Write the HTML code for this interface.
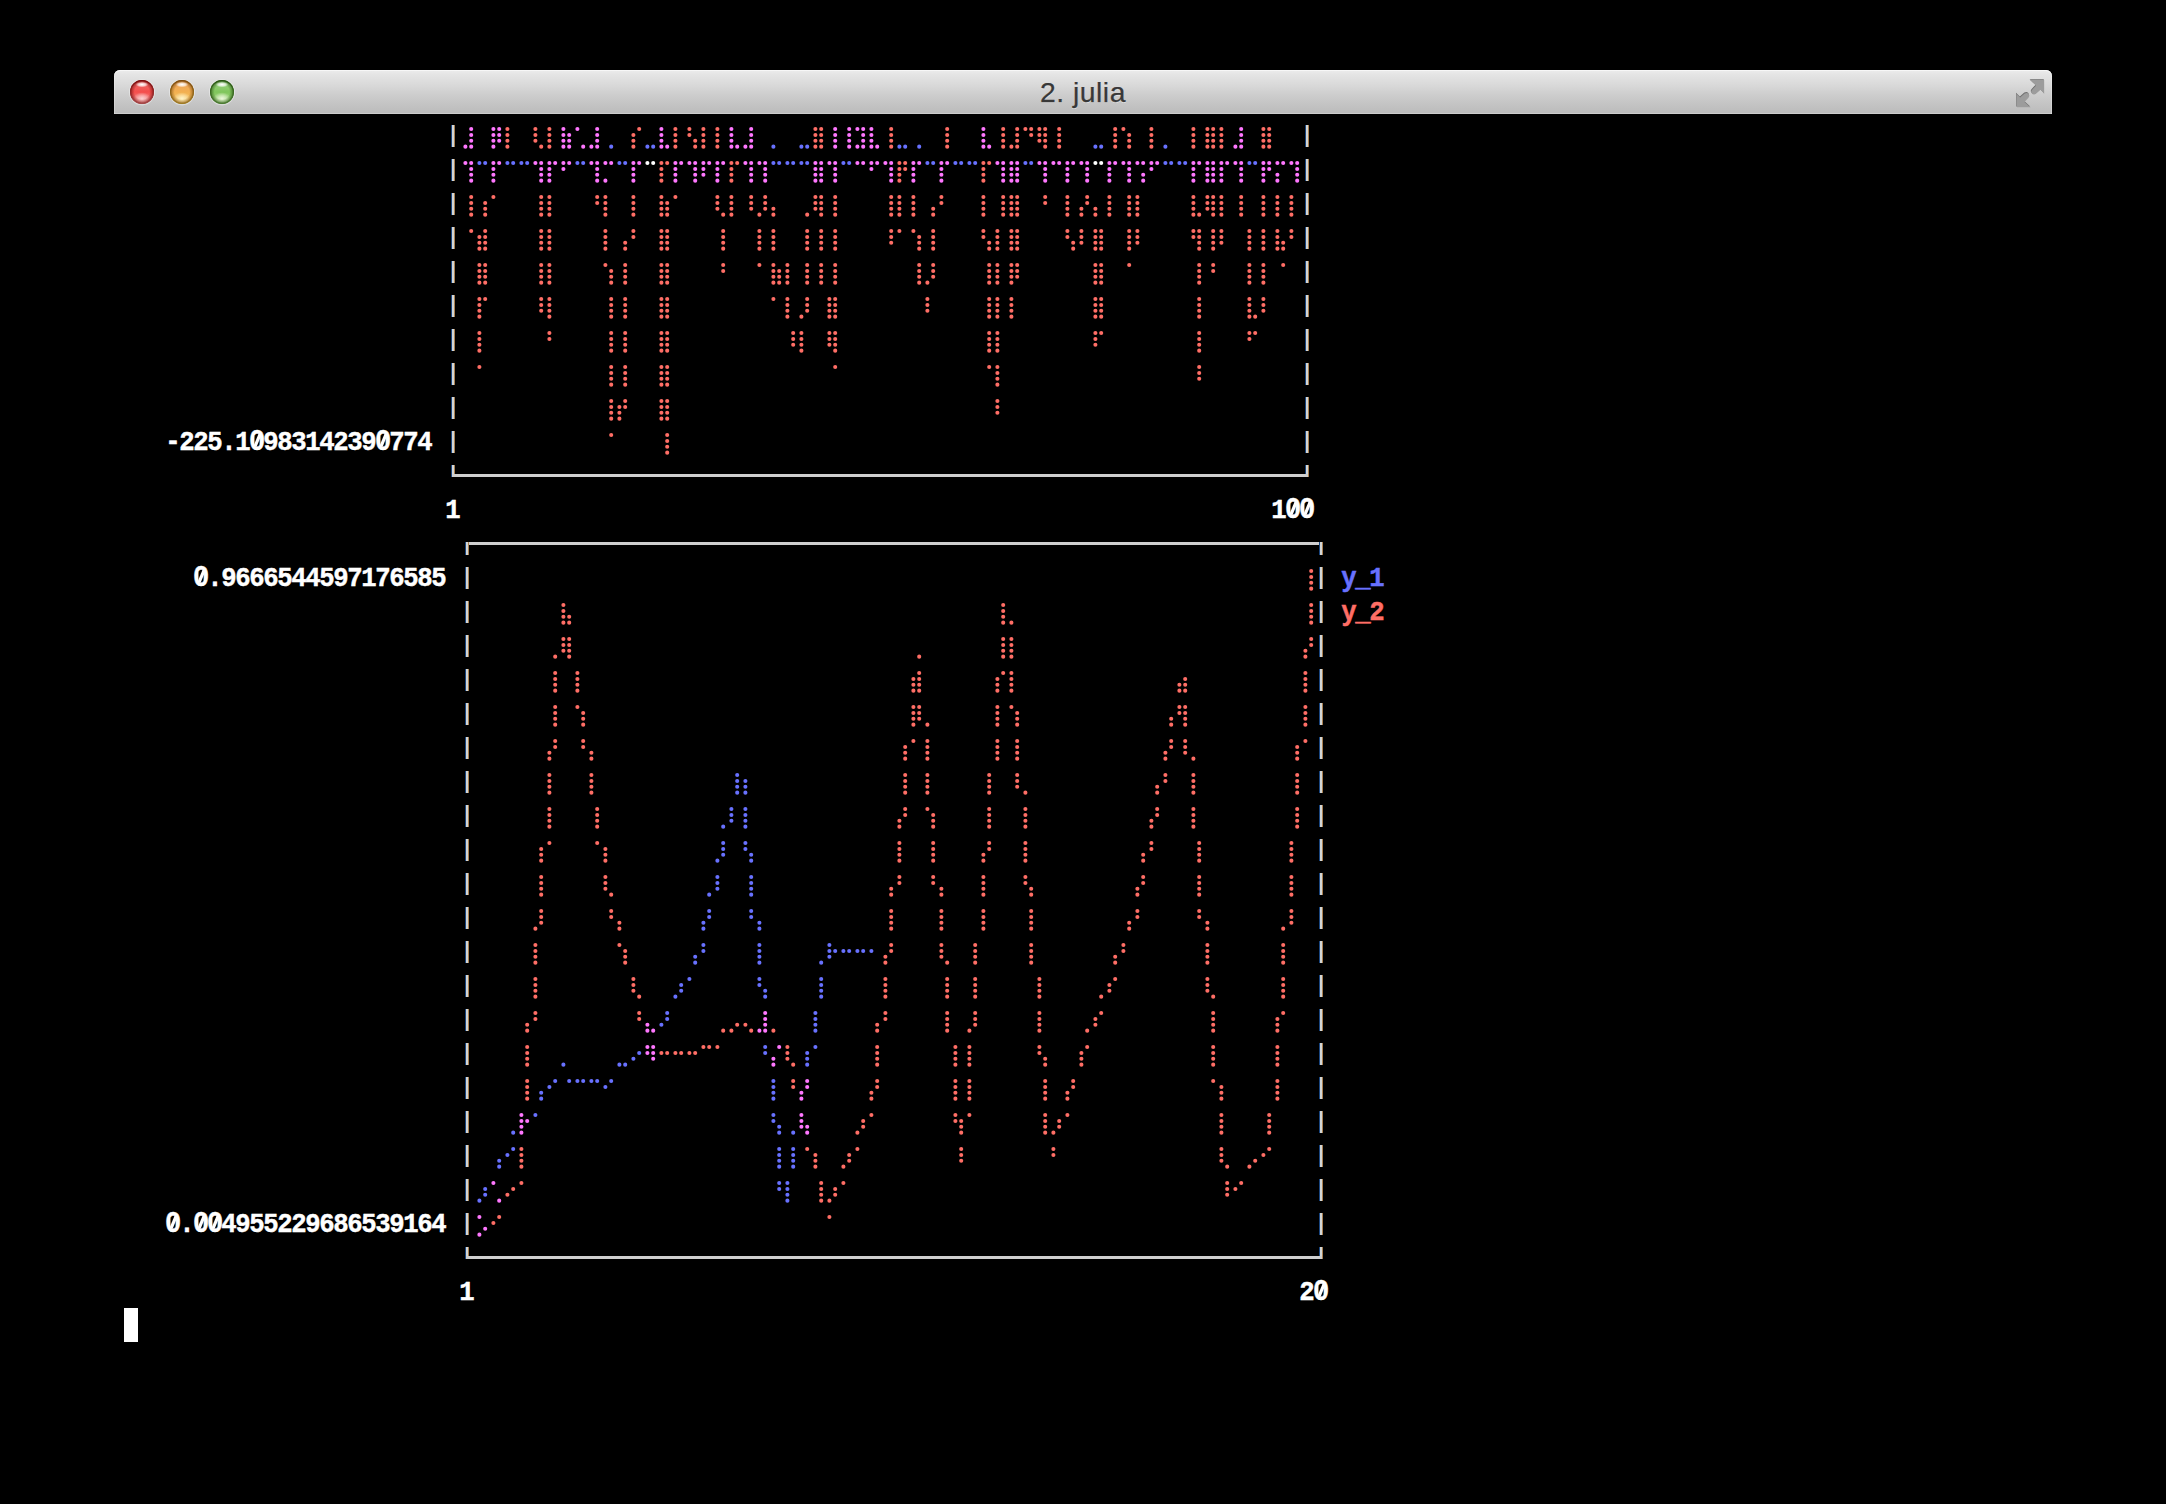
<!DOCTYPE html>
<html><head><meta charset="utf-8"><title>2. julia</title>
<style>
html,body{margin:0;padding:0;background:#000;}
body{width:2166px;height:1504px;overflow:hidden;position:relative;}
#tb{position:absolute;left:114px;top:70px;width:1938px;height:44px;border-radius:6px 6px 0 0;
 background:linear-gradient(#ececec 0px,#e4e4e4 5px,#d9d9d9 15px,#cdcdcd 25px,#c3c3c3 35px,#bcbcbc 42.5px,#cdcdcd 43px,#cdcdcd 44px);
 box-shadow:inset 0 1px 0 #f7f7f7, inset 1px 0 0 rgba(255,255,255,0.25), inset -1px 0 0 rgba(255,255,255,0.25);}
#title{position:absolute;left:0;right:0;top:77px;text-align:center;font:28.3px "Liberation Sans",sans-serif;
 color:#383838;letter-spacing:0.5px;-webkit-text-stroke:0.25px #383838;text-shadow:0 1px 0 rgba(255,255,255,0.5);line-height:30px;}
.t{position:absolute;font:bold 23.333px "Liberation Mono",monospace;line-height:34px;white-space:pre;
 transform:translateY(3px) scale(1,1.2);transform-origin:0 23px;-webkit-text-stroke:0.4px currentColor;}
svg{position:absolute;left:0;top:0;}
.c{position:relative;display:inline-block;width:14px;transform:scaleX(1.1);}
.z{transform:scale(1.16,1.05);}
.z::before{content:"";position:absolute;left:5px;top:11px;width:4px;height:8px;background:#000;}
.z::after{content:"";position:absolute;left:5.9px;top:10px;width:3.2px;height:10px;background:currentColor;transform:skewX(-24deg);}
</style></head><body>
<div id="tb"></div>
<div id="title">2. julia</div>
<svg width="2166" height="120" style="top:0">
<defs>
<radialGradient id="hl" cx="0.5" cy="0.45" r="0.5"><stop offset="0" stop-color="#fff" stop-opacity="1"/><stop offset="0.6" stop-color="#fff" stop-opacity="0.65"/><stop offset="1" stop-color="#fff" stop-opacity="0"/></radialGradient>

<linearGradient id="rrim" x1="0" y1="0" x2="0" y2="1"><stop offset="0" stop-color="#760808"/><stop offset="1" stop-color="#a85050"/></linearGradient>
<linearGradient id="rbody" x1="0" y1="0" x2="0" y2="1"><stop offset="0" stop-color="#ea7070"/><stop offset="0.5" stop-color="#f44e4c"/><stop offset="1" stop-color="#f49c9c"/></linearGradient>
<radialGradient id="rglow" cx="0.5" cy="0.5" r="0.5"><stop offset="0" stop-color="#fbd4d4" stop-opacity="0.95"/><stop offset="0.5" stop-color="#fbd4d4" stop-opacity="0.55"/><stop offset="1" stop-color="#fbd4d4" stop-opacity="0"/></radialGradient>
<radialGradient id="redge" cx="0.5" cy="0.5" r="0.5"><stop offset="0.62" stop-color="#760808" stop-opacity="0"/><stop offset="0.86" stop-color="#760808" stop-opacity="0.45"/><stop offset="1" stop-color="#760808" stop-opacity="0.9"/></radialGradient>

<linearGradient id="yrim" x1="0" y1="0" x2="0" y2="1"><stop offset="0" stop-color="#7a4a0c"/><stop offset="1" stop-color="#a08024"/></linearGradient>
<linearGradient id="ybody" x1="0" y1="0" x2="0" y2="1"><stop offset="0" stop-color="#eca060"/><stop offset="0.5" stop-color="#f2b050"/><stop offset="1" stop-color="#f6d070"/></linearGradient>
<radialGradient id="yglow" cx="0.5" cy="0.5" r="0.5"><stop offset="0" stop-color="#fff6cc" stop-opacity="0.95"/><stop offset="0.5" stop-color="#fff6cc" stop-opacity="0.55"/><stop offset="1" stop-color="#fff6cc" stop-opacity="0"/></radialGradient>
<radialGradient id="yedge" cx="0.5" cy="0.5" r="0.5"><stop offset="0.62" stop-color="#7a4a0c" stop-opacity="0"/><stop offset="0.86" stop-color="#7a4a0c" stop-opacity="0.45"/><stop offset="1" stop-color="#7a4a0c" stop-opacity="0.9"/></radialGradient>

<linearGradient id="grim" x1="0" y1="0" x2="0" y2="1"><stop offset="0" stop-color="#24500e"/><stop offset="1" stop-color="#4e7e34"/></linearGradient>
<linearGradient id="gbody" x1="0" y1="0" x2="0" y2="1"><stop offset="0" stop-color="#a0d488"/><stop offset="0.5" stop-color="#80c65c"/><stop offset="1" stop-color="#acdc8c"/></linearGradient>
<radialGradient id="gglow" cx="0.5" cy="0.5" r="0.5"><stop offset="0" stop-color="#f0f9e0" stop-opacity="0.95"/><stop offset="0.5" stop-color="#f0f9e0" stop-opacity="0.55"/><stop offset="1" stop-color="#f0f9e0" stop-opacity="0"/></radialGradient>
<radialGradient id="gedge" cx="0.5" cy="0.5" r="0.5"><stop offset="0.62" stop-color="#24500e" stop-opacity="0"/><stop offset="0.86" stop-color="#24500e" stop-opacity="0.45"/><stop offset="1" stop-color="#24500e" stop-opacity="0.9"/></radialGradient>

</defs>
<g>
 <circle cx="142" cy="92.3" r="12.5" fill="none" stroke="#f2f4f4" stroke-opacity="0.5" stroke-width="1.2"/>
 <circle cx="142" cy="92" r="11.9" fill="url(#rbody)"/>
 <ellipse cx="142" cy="98.5" rx="8.5" ry="6.2" fill="url(#rglow)"/>
 <circle cx="142" cy="92" r="11.9" fill="url(#redge)"/>
 <circle cx="142" cy="92" r="11.4" fill="none" stroke="url(#rrim)" stroke-width="1.1" stroke-opacity="0.85"/>
 <ellipse cx="142" cy="84.8" rx="6.4" ry="2.7" fill="url(#hl)"/>
</g>
<g>
 <circle cx="182" cy="92.3" r="12.5" fill="none" stroke="#f2f4f4" stroke-opacity="0.5" stroke-width="1.2"/>
 <circle cx="182" cy="92" r="11.9" fill="url(#ybody)"/>
 <ellipse cx="182" cy="98.5" rx="8.5" ry="6.2" fill="url(#yglow)"/>
 <circle cx="182" cy="92" r="11.9" fill="url(#yedge)"/>
 <circle cx="182" cy="92" r="11.4" fill="none" stroke="url(#yrim)" stroke-width="1.1" stroke-opacity="0.85"/>
 <ellipse cx="182" cy="84.8" rx="6.4" ry="2.7" fill="url(#hl)"/>
</g>
<g>
 <circle cx="222" cy="92.3" r="12.5" fill="none" stroke="#f2f4f4" stroke-opacity="0.5" stroke-width="1.2"/>
 <circle cx="222" cy="92" r="11.9" fill="url(#gbody)"/>
 <ellipse cx="222" cy="98.5" rx="8.5" ry="6.2" fill="url(#gglow)"/>
 <circle cx="222" cy="92" r="11.9" fill="url(#gedge)"/>
 <circle cx="222" cy="92" r="11.4" fill="none" stroke="url(#grim)" stroke-width="1.1" stroke-opacity="0.85"/>
 <ellipse cx="222" cy="84.8" rx="6.4" ry="2.7" fill="url(#hl)"/>
</g>

<g fill="#f2f2f2" transform="translate(0,1)" opacity="0.8">
 <path d="M2029.6 79.2 L2043.8 79.2 L2043.8 93 L2040 89.2 L2035.5 93.2 Q2033 94.5 2031.5 92.8 Q2030 91 2031.6 89 L2035.6 84.8 Z"/>
 <path d="M2030.2 106.6 L2016 106.6 L2016 92.8 L2019.8 96.6 L2024.3 92.6 Q2026.8 91.3 2028.3 93 Q2029.8 94.8 2028.2 96.8 L2024.2 101 Z"/>
</g>
<g fill="#6e6e6e">
 <path d="M2029.6 79.2 L2043.8 79.2 L2043.8 93 L2040 89.2 L2035.5 93.2 Q2033 94.5 2031.5 92.8 Q2030 91 2031.6 89 L2035.6 84.8 Z"/>
 <path d="M2030.2 106.6 L2016 106.6 L2016 92.8 L2019.8 96.6 L2024.3 92.6 Q2026.8 91.3 2028.3 93 Q2029.8 94.8 2028.2 96.8 L2024.2 101 Z"/>
</g>
<g fill="#9c9c9c" transform="translate(0.35,0.9) scale(1)">
 <path d="M2029.6 79.2 L2043.8 79.2 L2043.8 93 L2040 89.2 L2035.5 93.2 Q2033 94.5 2031.5 92.8 Q2030 91 2031.6 89 L2035.6 84.8 Z"/>
 <path d="M2030.2 106.6 L2016 106.6 L2016 92.8 L2019.8 96.6 L2024.3 92.6 Q2026.8 91.3 2028.3 93 Q2029.8 94.8 2028.2 96.8 L2024.2 101 Z"/>
</g>
</svg>
<svg width="2166" height="1504" style="top:0">
<path d="M507.4 129.05h0M507.4 134.95h0M507.4 140.8h0M507.4 146.65h0M535.4 129.05h0M535.4 134.95h0M535.4 140.8h0M541.2 146.65h0M549.4 129.05h0M549.4 134.95h0M549.4 140.8h0M549.4 146.65h0M639.2 129.05h0M633.4 134.95h0M633.4 140.8h0M633.4 146.65h0M675.4 129.05h0M675.4 134.95h0M675.4 140.8h0M675.4 146.65h0M689.4 129.05h0M689.4 134.95h0M695.2 140.8h0M695.2 146.65h0M703.4 129.05h0M703.4 134.95h0M703.4 140.8h0M703.4 146.65h0M717.4 129.05h0M717.4 134.95h0M717.4 140.8h0M717.4 146.65h0M815.4 129.05h0M821.2 129.05h0M815.4 134.95h0M821.2 134.95h0M815.4 140.8h0M821.2 140.8h0M815.4 146.65h0M821.2 146.65h0M891.2 129.05h0M891.2 134.95h0M891.2 140.8h0M891.2 146.65h0M947.2 129.05h0M947.2 134.95h0M947.2 140.8h0M947.2 146.65h0M1003.2 129.05h0M1003.2 134.95h0M1003.2 140.8h0M1003.2 146.65h0M1017.2 129.05h0M1017.2 134.95h0M1017.2 140.8h0M1011.4 146.65h0M1017.2 146.65h0M1025.4 129.05h0M1031.2 129.05h0M1031.2 134.95h0M1039.4 129.05h0M1045.2 129.05h0M1039.4 134.95h0M1045.2 134.95h0M1039.4 140.8h0M1045.2 140.8h0M1045.2 146.65h0M1059.2 129.05h0M1059.2 134.95h0M1059.2 140.8h0M1059.2 146.65h0M1115.2 129.05h0M1115.2 134.95h0M1115.2 140.8h0M1115.2 146.65h0M1123.4 129.05h0M1129.2 134.95h0M1129.2 140.8h0M1129.2 146.65h0M1151.4 129.05h0M1151.4 134.95h0M1151.4 140.8h0M1151.4 146.65h0M1193.4 129.05h0M1193.4 134.95h0M1193.4 140.8h0M1193.4 146.65h0M1207.4 129.05h0M1213.2 129.05h0M1207.4 134.95h0M1213.2 134.95h0M1207.4 140.8h0M1213.2 140.8h0M1207.4 146.65h0M1213.2 146.65h0M1221.4 129.05h0M1221.4 134.95h0M1221.4 140.8h0M1221.4 146.65h0M1263.4 129.05h0M1269.2 129.05h0M1263.4 134.95h0M1269.2 134.95h0M1263.4 140.8h0M1269.2 140.8h0M1263.4 146.65h0M1269.2 146.65h0M661.4 163.05h0M667.2 163.05h0M661.4 168.95h0M661.4 174.8h0M661.4 180.65h0M731.4 163.05h0M737.2 163.05h0M731.4 168.95h0M731.4 174.8h0M731.4 180.65h0M899.4 163.05h0M905.2 163.05h0M899.4 168.95h0M905.2 168.95h0M899.4 174.8h0M899.4 180.65h0M983.4 163.05h0M989.2 163.05h0M983.4 168.95h0M983.4 174.8h0M983.4 180.65h0M471.2 197.05h0M471.2 202.95h0M471.2 208.8h0M471.2 214.65h0M485.2 202.95h0M485.2 208.8h0M485.2 214.65h0M493.4 197.05h0M541.2 197.05h0M541.2 202.95h0M541.2 208.8h0M541.2 214.65h0M549.4 197.05h0M549.4 202.95h0M549.4 208.8h0M549.4 214.65h0M597.2 197.05h0M597.2 202.95h0M605.4 197.05h0M605.4 202.95h0M605.4 208.8h0M605.4 214.65h0M633.4 197.05h0M633.4 202.95h0M633.4 208.8h0M633.4 214.65h0M661.4 197.05h0M661.4 202.95h0M667.2 202.95h0M661.4 208.8h0M667.2 208.8h0M661.4 214.65h0M667.2 214.65h0M675.4 197.05h0M717.4 197.05h0M717.4 202.95h0M717.4 208.8h0M723.2 214.65h0M731.4 197.05h0M731.4 202.95h0M731.4 208.8h0M731.4 214.65h0M751.2 197.05h0M751.2 202.95h0M751.2 208.8h0M765.2 197.05h0M765.2 202.95h0M765.2 208.8h0M759.4 214.65h0M773.4 208.8h0M773.4 214.65h0M807.2 214.65h0M815.4 197.05h0M821.2 197.05h0M815.4 202.95h0M821.2 202.95h0M815.4 208.8h0M821.2 208.8h0M821.2 214.65h0M835.2 197.05h0M835.2 202.95h0M835.2 208.8h0M835.2 214.65h0M891.2 197.05h0M891.2 202.95h0M891.2 208.8h0M891.2 214.65h0M899.4 197.05h0M899.4 202.95h0M899.4 208.8h0M899.4 214.65h0M913.4 197.05h0M913.4 202.95h0M913.4 208.8h0M913.4 214.65h0M933.2 208.8h0M933.2 214.65h0M941.4 197.05h0M941.4 202.95h0M983.4 197.05h0M983.4 202.95h0M983.4 208.8h0M983.4 214.65h0M1003.2 197.05h0M1003.2 202.95h0M1003.2 208.8h0M1003.2 214.65h0M1011.4 197.05h0M1017.2 197.05h0M1011.4 202.95h0M1017.2 202.95h0M1011.4 208.8h0M1017.2 208.8h0M1011.4 214.65h0M1017.2 214.65h0M1045.2 197.05h0M1045.2 202.95h0M1067.4 197.05h0M1067.4 202.95h0M1067.4 208.8h0M1067.4 214.65h0M1087.2 197.05h0M1087.2 202.95h0M1081.4 208.8h0M1081.4 214.65h0M1095.4 208.8h0M1095.4 214.65h0M1109.4 197.05h0M1109.4 202.95h0M1109.4 208.8h0M1109.4 214.65h0M1129.2 197.05h0M1129.2 202.95h0M1129.2 208.8h0M1129.2 214.65h0M1137.4 197.05h0M1137.4 202.95h0M1137.4 208.8h0M1137.4 214.65h0M1193.4 197.05h0M1193.4 202.95h0M1193.4 208.8h0M1193.4 214.65h0M1199.2 214.65h0M1207.4 197.05h0M1213.2 197.05h0M1207.4 202.95h0M1213.2 202.95h0M1207.4 208.8h0M1213.2 208.8h0M1213.2 214.65h0M1221.4 197.05h0M1221.4 202.95h0M1221.4 208.8h0M1221.4 214.65h0M1241.2 197.05h0M1241.2 202.95h0M1241.2 208.8h0M1241.2 214.65h0M1263.4 197.05h0M1263.4 202.95h0M1263.4 208.8h0M1263.4 214.65h0M1277.4 197.05h0M1277.4 202.95h0M1277.4 208.8h0M1277.4 214.65h0M1291.4 197.05h0M1291.4 202.95h0M1291.4 208.8h0M1291.4 214.65h0M471.2 231.05h0M485.2 231.05h0M479.4 236.95h0M485.2 236.95h0M479.4 242.8h0M485.2 242.8h0M479.4 248.65h0M485.2 248.65h0M541.2 231.05h0M541.2 236.95h0M541.2 242.8h0M541.2 248.65h0M549.4 231.05h0M549.4 236.95h0M549.4 242.8h0M549.4 248.65h0M605.4 231.05h0M605.4 236.95h0M605.4 242.8h0M605.4 248.65h0M625.2 242.8h0M625.2 248.65h0M633.4 231.05h0M633.4 236.95h0M661.4 231.05h0M667.2 231.05h0M661.4 236.95h0M667.2 236.95h0M661.4 242.8h0M667.2 242.8h0M661.4 248.65h0M667.2 248.65h0M723.2 231.05h0M723.2 236.95h0M723.2 242.8h0M723.2 248.65h0M759.4 231.05h0M759.4 236.95h0M759.4 242.8h0M759.4 248.65h0M773.4 231.05h0M773.4 236.95h0M773.4 242.8h0M773.4 248.65h0M807.2 231.05h0M807.2 236.95h0M807.2 242.8h0M807.2 248.65h0M821.2 231.05h0M821.2 236.95h0M821.2 242.8h0M821.2 248.65h0M835.2 231.05h0M835.2 236.95h0M835.2 242.8h0M835.2 248.65h0M891.2 231.05h0M891.2 236.95h0M891.2 242.8h0M899.4 231.05h0M913.4 231.05h0M919.2 236.95h0M919.2 242.8h0M919.2 248.65h0M933.2 231.05h0M933.2 236.95h0M933.2 242.8h0M933.2 248.65h0M983.4 231.05h0M983.4 236.95h0M989.2 242.8h0M989.2 248.65h0M997.4 231.05h0M997.4 236.95h0M997.4 242.8h0M997.4 248.65h0M1011.4 231.05h0M1017.2 231.05h0M1011.4 236.95h0M1017.2 236.95h0M1011.4 242.8h0M1017.2 242.8h0M1011.4 248.65h0M1017.2 248.65h0M1067.4 231.05h0M1067.4 236.95h0M1073.2 242.8h0M1073.2 248.65h0M1081.4 231.05h0M1081.4 236.95h0M1081.4 242.8h0M1095.4 231.05h0M1101.2 231.05h0M1095.4 236.95h0M1101.2 236.95h0M1095.4 242.8h0M1101.2 242.8h0M1095.4 248.65h0M1101.2 248.65h0M1129.2 231.05h0M1129.2 236.95h0M1129.2 242.8h0M1129.2 248.65h0M1137.4 231.05h0M1137.4 236.95h0M1137.4 242.8h0M1193.4 231.05h0M1199.2 231.05h0M1193.4 236.95h0M1199.2 236.95h0M1199.2 242.8h0M1199.2 248.65h0M1213.2 231.05h0M1213.2 236.95h0M1213.2 242.8h0M1213.2 248.65h0M1221.4 231.05h0M1221.4 236.95h0M1221.4 242.8h0M1249.4 231.05h0M1249.4 236.95h0M1249.4 242.8h0M1249.4 248.65h0M1263.4 231.05h0M1263.4 236.95h0M1263.4 242.8h0M1263.4 248.65h0M1277.4 231.05h0M1277.4 236.95h0M1277.4 242.8h0M1283.2 242.8h0M1277.4 248.65h0M1283.2 248.65h0M1291.4 231.05h0M1291.4 236.95h0M479.4 265.05h0M485.2 265.05h0M479.4 270.95h0M485.2 270.95h0M479.4 276.8h0M485.2 276.8h0M479.4 282.65h0M485.2 282.65h0M541.2 265.05h0M541.2 270.95h0M541.2 276.8h0M541.2 282.65h0M549.4 265.05h0M549.4 270.95h0M549.4 276.8h0M549.4 282.65h0M605.4 265.05h0M611.2 270.95h0M611.2 276.8h0M611.2 282.65h0M625.2 265.05h0M625.2 270.95h0M625.2 276.8h0M625.2 282.65h0M661.4 265.05h0M667.2 265.05h0M661.4 270.95h0M667.2 270.95h0M661.4 276.8h0M667.2 276.8h0M661.4 282.65h0M667.2 282.65h0M723.2 265.05h0M723.2 270.95h0M759.4 265.05h0M773.4 265.05h0M773.4 270.95h0M779.2 270.95h0M773.4 276.8h0M779.2 276.8h0M773.4 282.65h0M779.2 282.65h0M787.4 265.05h0M787.4 270.95h0M787.4 276.8h0M787.4 282.65h0M807.2 265.05h0M807.2 270.95h0M807.2 276.8h0M807.2 282.65h0M821.2 265.05h0M821.2 270.95h0M821.2 276.8h0M821.2 282.65h0M835.2 265.05h0M835.2 270.95h0M835.2 276.8h0M835.2 282.65h0M919.2 265.05h0M919.2 270.95h0M919.2 276.8h0M919.2 282.65h0M933.2 265.05h0M933.2 270.95h0M933.2 276.8h0M927.4 282.65h0M989.2 265.05h0M989.2 270.95h0M989.2 276.8h0M989.2 282.65h0M997.4 265.05h0M997.4 270.95h0M997.4 276.8h0M997.4 282.65h0M1011.4 265.05h0M1017.2 265.05h0M1011.4 270.95h0M1017.2 270.95h0M1011.4 276.8h0M1017.2 276.8h0M1011.4 282.65h0M1095.4 265.05h0M1101.2 265.05h0M1095.4 270.95h0M1101.2 270.95h0M1095.4 276.8h0M1101.2 276.8h0M1095.4 282.65h0M1101.2 282.65h0M1129.2 265.05h0M1199.2 265.05h0M1199.2 270.95h0M1199.2 276.8h0M1199.2 282.65h0M1213.2 265.05h0M1213.2 270.95h0M1249.4 265.05h0M1249.4 270.95h0M1249.4 276.8h0M1249.4 282.65h0M1263.4 265.05h0M1263.4 270.95h0M1263.4 276.8h0M1263.4 282.65h0M1283.2 265.05h0M479.4 299.05h0M485.2 299.05h0M479.4 304.95h0M479.4 310.8h0M479.4 316.65h0M541.2 299.05h0M541.2 304.95h0M541.2 310.8h0M549.4 299.05h0M549.4 304.95h0M549.4 310.8h0M549.4 316.65h0M611.2 299.05h0M611.2 304.95h0M611.2 310.8h0M611.2 316.65h0M625.2 299.05h0M625.2 304.95h0M625.2 310.8h0M625.2 316.65h0M661.4 299.05h0M667.2 299.05h0M661.4 304.95h0M667.2 304.95h0M661.4 310.8h0M667.2 310.8h0M661.4 316.65h0M667.2 316.65h0M773.4 299.05h0M787.4 299.05h0M787.4 304.95h0M787.4 310.8h0M787.4 316.65h0M807.2 299.05h0M807.2 304.95h0M807.2 310.8h0M801.4 316.65h0M829.4 299.05h0M835.2 299.05h0M829.4 304.95h0M835.2 304.95h0M829.4 310.8h0M835.2 310.8h0M829.4 316.65h0M835.2 316.65h0M927.4 299.05h0M927.4 304.95h0M927.4 310.8h0M989.2 299.05h0M989.2 304.95h0M989.2 310.8h0M989.2 316.65h0M997.4 299.05h0M997.4 304.95h0M997.4 310.8h0M997.4 316.65h0M1011.4 299.05h0M1011.4 304.95h0M1011.4 310.8h0M1011.4 316.65h0M1095.4 299.05h0M1101.2 299.05h0M1095.4 304.95h0M1101.2 304.95h0M1095.4 310.8h0M1101.2 310.8h0M1095.4 316.65h0M1101.2 316.65h0M1199.2 299.05h0M1199.2 304.95h0M1199.2 310.8h0M1199.2 316.65h0M1249.4 299.05h0M1249.4 304.95h0M1249.4 310.8h0M1249.4 316.65h0M1255.2 316.65h0M1263.4 299.05h0M1263.4 304.95h0M1263.4 310.8h0M479.4 333.05h0M479.4 338.95h0M479.4 344.8h0M479.4 350.65h0M549.4 333.05h0M549.4 338.95h0M611.2 333.05h0M611.2 338.95h0M611.2 344.8h0M611.2 350.65h0M625.2 333.05h0M625.2 338.95h0M625.2 344.8h0M625.2 350.65h0M661.4 333.05h0M667.2 333.05h0M661.4 338.95h0M667.2 338.95h0M661.4 344.8h0M667.2 344.8h0M661.4 350.65h0M667.2 350.65h0M793.2 333.05h0M793.2 338.95h0M793.2 344.8h0M801.4 333.05h0M801.4 338.95h0M801.4 344.8h0M801.4 350.65h0M829.4 333.05h0M835.2 333.05h0M829.4 338.95h0M835.2 338.95h0M829.4 344.8h0M835.2 344.8h0M835.2 350.65h0M989.2 333.05h0M989.2 338.95h0M989.2 344.8h0M989.2 350.65h0M997.4 333.05h0M997.4 338.95h0M997.4 344.8h0M997.4 350.65h0M1095.4 333.05h0M1101.2 333.05h0M1095.4 338.95h0M1095.4 344.8h0M1199.2 333.05h0M1199.2 338.95h0M1199.2 344.8h0M1199.2 350.65h0M1249.4 333.05h0M1255.2 333.05h0M1249.4 338.95h0M479.4 367.05h0M611.2 367.05h0M611.2 372.95h0M611.2 378.8h0M611.2 384.65h0M625.2 367.05h0M625.2 372.95h0M625.2 378.8h0M625.2 384.65h0M661.4 367.05h0M667.2 367.05h0M661.4 372.95h0M667.2 372.95h0M661.4 378.8h0M667.2 378.8h0M661.4 384.65h0M667.2 384.65h0M835.2 367.05h0M989.2 367.05h0M997.4 367.05h0M997.4 372.95h0M997.4 378.8h0M997.4 384.65h0M1199.2 367.05h0M1199.2 372.95h0M1199.2 378.8h0M611.2 401.05h0M611.2 406.95h0M611.2 412.8h0M611.2 418.65h0M625.2 401.05h0M619.4 406.95h0M625.2 406.95h0M619.4 412.8h0M619.4 418.65h0M661.4 401.05h0M667.2 401.05h0M661.4 406.95h0M667.2 406.95h0M661.4 412.8h0M667.2 412.8h0M661.4 418.65h0M667.2 418.65h0M997.4 401.05h0M997.4 406.95h0M997.4 412.8h0M611.2 435.05h0M667.2 435.05h0M667.2 440.95h0M667.2 446.8h0M667.2 452.65h0M1311.2 571.05h0M1311.2 576.95h0M1311.2 582.8h0M1311.2 588.65h0M563.4 605.05h0M563.4 610.95h0M563.4 616.8h0M569.2 616.8h0M563.4 622.65h0M569.2 622.65h0M1003.2 605.05h0M1003.2 610.95h0M1003.2 616.8h0M1003.2 622.65h0M1011.4 622.65h0M1311.2 605.05h0M1311.2 610.95h0M1311.2 616.8h0M1311.2 622.65h0M555.2 656.65h0M563.4 639.05h0M569.2 639.05h0M563.4 644.95h0M569.2 644.95h0M563.4 650.8h0M569.2 650.8h0M569.2 656.65h0M919.2 656.65h0M1003.2 639.05h0M1003.2 644.95h0M1003.2 650.8h0M1003.2 656.65h0M1011.4 639.05h0M1011.4 644.95h0M1011.4 650.8h0M1011.4 656.65h0M1311.2 639.05h0M1311.2 644.95h0M1305.4 650.8h0M1305.4 656.65h0M555.2 673.05h0M555.2 678.95h0M555.2 684.8h0M555.2 690.65h0M577.4 673.05h0M577.4 678.95h0M577.4 684.8h0M577.4 690.65h0M919.2 673.05h0M913.4 678.95h0M919.2 678.95h0M913.4 684.8h0M919.2 684.8h0M913.4 690.65h0M919.2 690.65h0M1003.2 673.05h0M997.4 678.95h0M997.4 684.8h0M997.4 690.65h0M1011.4 673.05h0M1011.4 678.95h0M1011.4 684.8h0M1011.4 690.65h0M1185.2 678.95h0M1179.4 684.8h0M1185.2 684.8h0M1179.4 690.65h0M1185.2 690.65h0M1305.4 673.05h0M1305.4 678.95h0M1305.4 684.8h0M1305.4 690.65h0M555.2 707.05h0M555.2 712.95h0M555.2 718.8h0M555.2 724.65h0M577.4 707.05h0M583.2 712.95h0M583.2 718.8h0M583.2 724.65h0M913.4 707.05h0M919.2 707.05h0M913.4 712.95h0M919.2 712.95h0M913.4 718.8h0M919.2 718.8h0M913.4 724.65h0M927.4 724.65h0M997.4 707.05h0M997.4 712.95h0M997.4 718.8h0M997.4 724.65h0M1011.4 707.05h0M1017.2 712.95h0M1017.2 718.8h0M1017.2 724.65h0M1171.2 718.8h0M1171.2 724.65h0M1179.4 707.05h0M1185.2 707.05h0M1179.4 712.95h0M1185.2 712.95h0M1185.2 718.8h0M1185.2 724.65h0M1305.4 707.05h0M1305.4 712.95h0M1305.4 718.8h0M1305.4 724.65h0M555.2 741.05h0M555.2 746.95h0M549.4 752.8h0M549.4 758.65h0M583.2 741.05h0M583.2 746.95h0M591.4 752.8h0M591.4 758.65h0M905.2 746.95h0M905.2 752.8h0M905.2 758.65h0M913.4 741.05h0M927.4 741.05h0M927.4 746.95h0M927.4 752.8h0M927.4 758.65h0M997.4 741.05h0M997.4 746.95h0M997.4 752.8h0M997.4 758.65h0M1017.2 741.05h0M1017.2 746.95h0M1017.2 752.8h0M1017.2 758.65h0M1171.2 741.05h0M1171.2 746.95h0M1165.4 752.8h0M1165.4 758.65h0M1185.2 741.05h0M1185.2 746.95h0M1185.2 752.8h0M1193.4 758.65h0M1297.2 746.95h0M1297.2 752.8h0M1297.2 758.65h0M1305.4 741.05h0M549.4 775.05h0M549.4 780.95h0M549.4 786.8h0M549.4 792.65h0M591.4 775.05h0M591.4 780.95h0M591.4 786.8h0M591.4 792.65h0M905.2 775.05h0M905.2 780.95h0M905.2 786.8h0M905.2 792.65h0M927.4 775.05h0M927.4 780.95h0M927.4 786.8h0M927.4 792.65h0M989.2 775.05h0M989.2 780.95h0M989.2 786.8h0M989.2 792.65h0M1017.2 775.05h0M1017.2 780.95h0M1017.2 786.8h0M1025.4 792.65h0M1157.2 786.8h0M1157.2 792.65h0M1165.4 775.05h0M1165.4 780.95h0M1193.4 775.05h0M1193.4 780.95h0M1193.4 786.8h0M1193.4 792.65h0M1297.2 775.05h0M1297.2 780.95h0M1297.2 786.8h0M1297.2 792.65h0M549.4 809.05h0M549.4 814.95h0M549.4 820.8h0M549.4 826.65h0M597.2 809.05h0M597.2 814.95h0M597.2 820.8h0M597.2 826.65h0M905.2 809.05h0M905.2 814.95h0M899.4 820.8h0M899.4 826.65h0M927.4 809.05h0M933.2 814.95h0M933.2 820.8h0M933.2 826.65h0M989.2 809.05h0M989.2 814.95h0M989.2 820.8h0M989.2 826.65h0M1025.4 809.05h0M1025.4 814.95h0M1025.4 820.8h0M1025.4 826.65h0M1157.2 809.05h0M1157.2 814.95h0M1151.4 820.8h0M1151.4 826.65h0M1193.4 809.05h0M1193.4 814.95h0M1193.4 820.8h0M1193.4 826.65h0M1297.2 809.05h0M1297.2 814.95h0M1297.2 820.8h0M1297.2 826.65h0M541.2 848.95h0M541.2 854.8h0M541.2 860.65h0M549.4 843.05h0M597.2 843.05h0M605.4 848.95h0M605.4 854.8h0M605.4 860.65h0M899.4 843.05h0M899.4 848.95h0M899.4 854.8h0M899.4 860.65h0M933.2 843.05h0M933.2 848.95h0M933.2 854.8h0M933.2 860.65h0M989.2 843.05h0M989.2 848.95h0M983.4 854.8h0M983.4 860.65h0M1025.4 843.05h0M1025.4 848.95h0M1025.4 854.8h0M1025.4 860.65h0M1143.2 854.8h0M1143.2 860.65h0M1151.4 843.05h0M1151.4 848.95h0M1199.2 843.05h0M1199.2 848.95h0M1199.2 854.8h0M1199.2 860.65h0M1291.4 843.05h0M1291.4 848.95h0M1291.4 854.8h0M1291.4 860.65h0M541.2 877.05h0M541.2 882.95h0M541.2 888.8h0M541.2 894.65h0M605.4 877.05h0M605.4 882.95h0M605.4 888.8h0M611.2 894.65h0M891.2 888.8h0M891.2 894.65h0M899.4 877.05h0M899.4 882.95h0M933.2 877.05h0M933.2 882.95h0M941.4 888.8h0M941.4 894.65h0M983.4 877.05h0M983.4 882.95h0M983.4 888.8h0M983.4 894.65h0M1025.4 877.05h0M1025.4 882.95h0M1031.2 888.8h0M1031.2 894.65h0M1143.2 877.05h0M1143.2 882.95h0M1137.4 888.8h0M1137.4 894.65h0M1199.2 877.05h0M1199.2 882.95h0M1199.2 888.8h0M1199.2 894.65h0M1291.4 877.05h0M1291.4 882.95h0M1291.4 888.8h0M1291.4 894.65h0M541.2 911.05h0M541.2 916.95h0M541.2 922.8h0M535.4 928.65h0M611.2 911.05h0M611.2 916.95h0M619.4 922.8h0M619.4 928.65h0M891.2 911.05h0M891.2 916.95h0M891.2 922.8h0M891.2 928.65h0M941.4 911.05h0M941.4 916.95h0M941.4 922.8h0M941.4 928.65h0M983.4 911.05h0M983.4 916.95h0M983.4 922.8h0M983.4 928.65h0M1031.2 911.05h0M1031.2 916.95h0M1031.2 922.8h0M1031.2 928.65h0M1129.2 922.8h0M1129.2 928.65h0M1137.4 911.05h0M1137.4 916.95h0M1199.2 911.05h0M1199.2 916.95h0M1207.4 922.8h0M1207.4 928.65h0M1283.2 928.65h0M1291.4 911.05h0M1291.4 916.95h0M1291.4 922.8h0M535.4 945.05h0M535.4 950.95h0M535.4 956.8h0M535.4 962.65h0M619.4 945.05h0M625.2 950.95h0M625.2 956.8h0M625.2 962.65h0M891.2 945.05h0M891.2 950.95h0M885.4 956.8h0M885.4 962.65h0M941.4 945.05h0M941.4 950.95h0M941.4 956.8h0M947.2 962.65h0M975.2 945.05h0M975.2 950.95h0M975.2 956.8h0M975.2 962.65h0M1031.2 945.05h0M1031.2 950.95h0M1031.2 956.8h0M1031.2 962.65h0M1115.2 956.8h0M1115.2 962.65h0M1123.4 945.05h0M1123.4 950.95h0M1207.4 945.05h0M1207.4 950.95h0M1207.4 956.8h0M1207.4 962.65h0M1283.2 945.05h0M1283.2 950.95h0M1283.2 956.8h0M1283.2 962.65h0M535.4 979.05h0M535.4 984.95h0M535.4 990.8h0M535.4 996.65h0M633.4 979.05h0M633.4 984.95h0M633.4 990.8h0M639.2 996.65h0M885.4 979.05h0M885.4 984.95h0M885.4 990.8h0M885.4 996.65h0M947.2 979.05h0M947.2 984.95h0M947.2 990.8h0M947.2 996.65h0M975.2 979.05h0M975.2 984.95h0M975.2 990.8h0M975.2 996.65h0M1039.4 979.05h0M1039.4 984.95h0M1039.4 990.8h0M1039.4 996.65h0M1101.2 996.65h0M1115.2 979.05h0M1109.4 984.95h0M1109.4 990.8h0M1207.4 979.05h0M1207.4 984.95h0M1207.4 990.8h0M1213.2 996.65h0M1283.2 979.05h0M1283.2 984.95h0M1283.2 990.8h0M1283.2 996.65h0M527.2 1024.8h0M527.2 1030.65h0M535.4 1013.05h0M535.4 1018.95h0M639.2 1013.05h0M639.2 1018.95h0M723.2 1030.65h0M737.2 1024.8h0M731.4 1030.65h0M745.4 1024.8h0M751.2 1030.65h0M773.4 1030.65h0M877.2 1024.8h0M877.2 1030.65h0M885.4 1013.05h0M885.4 1018.95h0M947.2 1013.05h0M947.2 1018.95h0M947.2 1024.8h0M947.2 1030.65h0M975.2 1013.05h0M975.2 1018.95h0M975.2 1024.8h0M969.4 1030.65h0M1039.4 1013.05h0M1039.4 1018.95h0M1039.4 1024.8h0M1039.4 1030.65h0M1087.2 1030.65h0M1101.2 1013.05h0M1095.4 1018.95h0M1095.4 1024.8h0M1213.2 1013.05h0M1213.2 1018.95h0M1213.2 1024.8h0M1213.2 1030.65h0M1283.2 1013.05h0M1277.4 1018.95h0M1277.4 1024.8h0M1277.4 1030.65h0M527.2 1047.05h0M527.2 1052.95h0M527.2 1058.8h0M527.2 1064.65h0M661.4 1052.95h0M667.2 1052.95h0M675.4 1052.95h0M681.2 1052.95h0M689.4 1052.95h0M695.2 1052.95h0M703.4 1047.05h0M709.2 1047.05h0M717.4 1047.05h0M787.4 1047.05h0M787.4 1052.95h0M787.4 1058.8h0M793.2 1064.65h0M877.2 1047.05h0M877.2 1052.95h0M877.2 1058.8h0M877.2 1064.65h0M955.4 1047.05h0M955.4 1052.95h0M955.4 1058.8h0M955.4 1064.65h0M969.4 1047.05h0M969.4 1052.95h0M969.4 1058.8h0M969.4 1064.65h0M1039.4 1047.05h0M1039.4 1052.95h0M1045.2 1058.8h0M1045.2 1064.65h0M1087.2 1047.05h0M1081.4 1052.95h0M1081.4 1058.8h0M1081.4 1064.65h0M1213.2 1047.05h0M1213.2 1052.95h0M1213.2 1058.8h0M1213.2 1064.65h0M1277.4 1047.05h0M1277.4 1052.95h0M1277.4 1058.8h0M1277.4 1064.65h0M527.2 1081.05h0M527.2 1086.95h0M527.2 1092.8h0M527.2 1098.65h0M793.2 1081.05h0M793.2 1086.95h0M877.2 1081.05h0M877.2 1086.95h0M871.4 1092.8h0M871.4 1098.65h0M955.4 1081.05h0M955.4 1086.95h0M955.4 1092.8h0M955.4 1098.65h0M969.4 1081.05h0M969.4 1086.95h0M969.4 1092.8h0M969.4 1098.65h0M1045.2 1081.05h0M1045.2 1086.95h0M1045.2 1092.8h0M1045.2 1098.65h0M1073.2 1081.05h0M1073.2 1086.95h0M1067.4 1092.8h0M1067.4 1098.65h0M1213.2 1081.05h0M1221.4 1086.95h0M1221.4 1092.8h0M1221.4 1098.65h0M1277.4 1081.05h0M1277.4 1086.95h0M1277.4 1092.8h0M1277.4 1098.65h0M863.2 1120.95h0M863.2 1126.8h0M857.4 1132.65h0M871.4 1115.05h0M955.4 1115.05h0M955.4 1120.95h0M961.2 1120.95h0M961.2 1126.8h0M961.2 1132.65h0M969.4 1115.05h0M1045.2 1115.05h0M1045.2 1120.95h0M1045.2 1126.8h0M1045.2 1132.65h0M1059.2 1120.95h0M1059.2 1126.8h0M1053.4 1132.65h0M1067.4 1115.05h0M1221.4 1115.05h0M1221.4 1120.95h0M1221.4 1126.8h0M1221.4 1132.65h0M1269.2 1115.05h0M1269.2 1120.95h0M1269.2 1126.8h0M1269.2 1132.65h0M521.4 1149.05h0M521.4 1154.95h0M521.4 1160.8h0M521.4 1166.65h0M807.2 1149.05h0M815.4 1154.95h0M815.4 1160.8h0M815.4 1166.65h0M849.2 1154.95h0M849.2 1160.8h0M843.4 1166.65h0M857.4 1149.05h0M961.2 1149.05h0M961.2 1154.95h0M961.2 1160.8h0M1053.4 1149.05h0M1053.4 1154.95h0M1221.4 1149.05h0M1221.4 1154.95h0M1221.4 1160.8h0M1227.2 1166.65h0M1255.2 1160.8h0M1249.4 1166.65h0M1269.2 1149.05h0M1263.4 1154.95h0M513.2 1188.95h0M507.4 1194.8h0M521.4 1183.05h0M821.2 1183.05h0M821.2 1188.95h0M821.2 1194.8h0M821.2 1200.65h0M835.2 1188.95h0M835.2 1194.8h0M829.4 1200.65h0M843.4 1183.05h0M1227.2 1183.05h0M1227.2 1188.95h0M1227.2 1194.8h0M1241.2 1183.05h0M1235.4 1188.95h0M499.2 1217.05h0M493.4 1222.95h0M829.4 1217.05h0" stroke="#ff6e66" stroke-width="4.1" stroke-linecap="round" fill="none"/>
<path d="M611.2 146.65h0M647.4 146.65h0M653.2 146.65h0M773.4 146.65h0M801.4 146.65h0M807.2 146.65h0M899.4 146.65h0M905.2 146.65h0M919.2 146.65h0M1095.4 146.65h0M1101.2 146.65h0M1165.4 146.65h0M479.4 163.05h0M485.2 163.05h0M507.4 163.05h0M513.2 163.05h0M521.4 163.05h0M527.2 163.05h0M577.4 163.05h0M583.2 163.05h0M619.4 163.05h0M625.2 163.05h0M773.4 163.05h0M779.2 163.05h0M787.4 163.05h0M793.2 163.05h0M801.4 163.05h0M807.2 163.05h0M843.4 163.05h0M849.2 163.05h0M927.4 163.05h0M933.2 163.05h0M955.4 163.05h0M961.2 163.05h0M969.4 163.05h0M975.2 163.05h0M1025.4 163.05h0M1031.2 163.05h0M1165.4 163.05h0M1171.2 163.05h0M1179.4 163.05h0M1185.2 163.05h0M1249.4 163.05h0M1255.2 163.05h0M737.2 775.05h0M737.2 780.95h0M737.2 786.8h0M737.2 792.65h0M745.4 780.95h0M745.4 786.8h0M745.4 792.65h0M723.2 826.65h0M731.4 809.05h0M731.4 814.95h0M731.4 820.8h0M745.4 809.05h0M745.4 814.95h0M745.4 820.8h0M745.4 826.65h0M723.2 843.05h0M723.2 848.95h0M723.2 854.8h0M717.4 860.65h0M745.4 843.05h0M745.4 848.95h0M751.2 854.8h0M751.2 860.65h0M709.2 894.65h0M717.4 877.05h0M717.4 882.95h0M717.4 888.8h0M751.2 877.05h0M751.2 882.95h0M751.2 888.8h0M751.2 894.65h0M709.2 911.05h0M709.2 916.95h0M703.4 922.8h0M703.4 928.65h0M751.2 911.05h0M751.2 916.95h0M759.4 922.8h0M759.4 928.65h0M695.2 956.8h0M695.2 962.65h0M703.4 945.05h0M703.4 950.95h0M759.4 945.05h0M759.4 950.95h0M759.4 956.8h0M759.4 962.65h0M821.2 962.65h0M829.4 945.05h0M829.4 950.95h0M835.2 950.95h0M829.4 956.8h0M843.4 950.95h0M849.2 950.95h0M857.4 950.95h0M863.2 950.95h0M871.4 950.95h0M681.2 984.95h0M681.2 990.8h0M675.4 996.65h0M689.4 979.05h0M759.4 979.05h0M759.4 984.95h0M765.2 990.8h0M765.2 996.65h0M821.2 979.05h0M821.2 984.95h0M821.2 990.8h0M821.2 996.65h0M667.2 1013.05h0M667.2 1018.95h0M661.4 1024.8h0M815.4 1013.05h0M815.4 1018.95h0M815.4 1024.8h0M815.4 1030.65h0M563.4 1064.65h0M619.4 1064.65h0M625.2 1064.65h0M639.2 1052.95h0M633.4 1058.8h0M765.2 1047.05h0M765.2 1052.95h0M807.2 1052.95h0M807.2 1058.8h0M807.2 1064.65h0M815.4 1047.05h0M541.2 1092.8h0M541.2 1098.65h0M555.2 1081.05h0M549.4 1086.95h0M569.2 1081.05h0M577.4 1081.05h0M583.2 1081.05h0M591.4 1081.05h0M597.2 1081.05h0M611.2 1081.05h0M605.4 1086.95h0M773.4 1081.05h0M773.4 1086.95h0M773.4 1092.8h0M773.4 1098.65h0M513.2 1132.65h0M535.4 1115.05h0M773.4 1115.05h0M773.4 1120.95h0M779.2 1126.8h0M779.2 1132.65h0M793.2 1132.65h0M499.2 1160.8h0M499.2 1166.65h0M513.2 1149.05h0M507.4 1154.95h0M779.2 1149.05h0M779.2 1154.95h0M779.2 1160.8h0M779.2 1166.65h0M793.2 1149.05h0M793.2 1154.95h0M793.2 1160.8h0M793.2 1166.65h0M485.2 1188.95h0M485.2 1194.8h0M479.4 1200.65h0M779.2 1183.05h0M779.2 1188.95h0M787.4 1183.05h0M787.4 1188.95h0M787.4 1194.8h0M787.4 1200.65h0" stroke="#6871ff" stroke-width="4.1" stroke-linecap="round" fill="none"/>
<path d="M471.2 129.05h0M471.2 134.95h0M471.2 140.8h0M465.4 146.65h0M471.2 146.65h0M493.4 129.05h0M499.2 129.05h0M493.4 134.95h0M499.2 134.95h0M493.4 140.8h0M499.2 140.8h0M493.4 146.65h0M563.4 129.05h0M563.4 134.95h0M569.2 134.95h0M563.4 140.8h0M569.2 140.8h0M563.4 146.65h0M569.2 146.65h0M577.4 129.05h0M583.2 146.65h0M597.2 129.05h0M597.2 134.95h0M597.2 140.8h0M591.4 146.65h0M597.2 146.65h0M661.4 129.05h0M661.4 134.95h0M661.4 140.8h0M661.4 146.65h0M667.2 146.65h0M731.4 129.05h0M731.4 134.95h0M731.4 140.8h0M731.4 146.65h0M737.2 146.65h0M751.2 129.05h0M751.2 134.95h0M751.2 140.8h0M745.4 146.65h0M751.2 146.65h0M835.2 129.05h0M835.2 134.95h0M835.2 140.8h0M835.2 146.65h0M849.2 129.05h0M849.2 134.95h0M849.2 140.8h0M849.2 146.65h0M857.4 129.05h0M863.2 129.05h0M863.2 134.95h0M863.2 140.8h0M857.4 146.65h0M863.2 146.65h0M871.4 129.05h0M871.4 134.95h0M871.4 140.8h0M871.4 146.65h0M877.2 146.65h0M983.4 129.05h0M983.4 134.95h0M983.4 140.8h0M983.4 146.65h0M989.2 146.65h0M1241.2 129.05h0M1241.2 134.95h0M1241.2 140.8h0M1235.4 146.65h0M1241.2 146.65h0M465.4 163.05h0M471.2 163.05h0M471.2 168.95h0M471.2 174.8h0M471.2 180.65h0M493.4 163.05h0M499.2 163.05h0M493.4 168.95h0M493.4 174.8h0M493.4 180.65h0M535.4 163.05h0M541.2 163.05h0M541.2 168.95h0M541.2 174.8h0M541.2 180.65h0M549.4 163.05h0M555.2 163.05h0M549.4 168.95h0M549.4 174.8h0M549.4 180.65h0M563.4 163.05h0M569.2 163.05h0M563.4 168.95h0M591.4 163.05h0M597.2 163.05h0M597.2 168.95h0M597.2 174.8h0M597.2 180.65h0M605.4 163.05h0M611.2 163.05h0M605.4 180.65h0M633.4 163.05h0M639.2 163.05h0M633.4 168.95h0M633.4 174.8h0M633.4 180.65h0M675.4 163.05h0M681.2 163.05h0M675.4 168.95h0M675.4 174.8h0M675.4 180.65h0M689.4 163.05h0M695.2 163.05h0M695.2 168.95h0M695.2 174.8h0M695.2 180.65h0M703.4 163.05h0M709.2 163.05h0M703.4 168.95h0M703.4 174.8h0M717.4 163.05h0M723.2 163.05h0M717.4 168.95h0M717.4 174.8h0M717.4 180.65h0M745.4 163.05h0M751.2 163.05h0M751.2 168.95h0M751.2 174.8h0M751.2 180.65h0M759.4 163.05h0M765.2 163.05h0M765.2 168.95h0M765.2 174.8h0M765.2 180.65h0M815.4 163.05h0M821.2 163.05h0M815.4 168.95h0M821.2 168.95h0M815.4 174.8h0M821.2 174.8h0M815.4 180.65h0M821.2 180.65h0M829.4 163.05h0M835.2 163.05h0M835.2 168.95h0M835.2 174.8h0M835.2 180.65h0M857.4 163.05h0M863.2 163.05h0M871.4 163.05h0M877.2 163.05h0M871.4 168.95h0M885.4 163.05h0M891.2 163.05h0M891.2 168.95h0M891.2 174.8h0M891.2 180.65h0M913.4 163.05h0M919.2 163.05h0M913.4 168.95h0M913.4 174.8h0M913.4 180.65h0M941.4 163.05h0M947.2 163.05h0M941.4 168.95h0M941.4 174.8h0M941.4 180.65h0M997.4 163.05h0M1003.2 163.05h0M1003.2 168.95h0M1003.2 174.8h0M1003.2 180.65h0M1011.4 163.05h0M1017.2 163.05h0M1011.4 168.95h0M1017.2 168.95h0M1011.4 174.8h0M1017.2 174.8h0M1011.4 180.65h0M1017.2 180.65h0M1039.4 163.05h0M1045.2 163.05h0M1045.2 168.95h0M1045.2 174.8h0M1045.2 180.65h0M1053.4 163.05h0M1059.2 163.05h0M1067.4 163.05h0M1073.2 163.05h0M1067.4 168.95h0M1067.4 174.8h0M1067.4 180.65h0M1081.4 163.05h0M1087.2 163.05h0M1087.2 168.95h0M1087.2 174.8h0M1087.2 180.65h0M1109.4 163.05h0M1115.2 163.05h0M1109.4 168.95h0M1109.4 174.8h0M1109.4 180.65h0M1123.4 163.05h0M1129.2 163.05h0M1129.2 168.95h0M1129.2 174.8h0M1129.2 180.65h0M1137.4 163.05h0M1143.2 163.05h0M1143.2 174.8h0M1143.2 180.65h0M1151.4 163.05h0M1157.2 163.05h0M1151.4 168.95h0M1193.4 163.05h0M1199.2 163.05h0M1193.4 168.95h0M1193.4 174.8h0M1193.4 180.65h0M1207.4 163.05h0M1213.2 163.05h0M1207.4 168.95h0M1213.2 168.95h0M1207.4 174.8h0M1213.2 174.8h0M1207.4 180.65h0M1213.2 180.65h0M1221.4 163.05h0M1227.2 163.05h0M1221.4 168.95h0M1221.4 174.8h0M1221.4 180.65h0M1235.4 163.05h0M1241.2 163.05h0M1241.2 168.95h0M1241.2 174.8h0M1241.2 180.65h0M1263.4 163.05h0M1269.2 163.05h0M1263.4 168.95h0M1269.2 168.95h0M1263.4 174.8h0M1263.4 180.65h0M1277.4 163.05h0M1283.2 163.05h0M1277.4 174.8h0M1277.4 180.65h0M1291.4 163.05h0M1297.2 163.05h0M1297.2 168.95h0M1297.2 174.8h0M1297.2 180.65h0M647.4 1024.8h0M647.4 1030.65h0M653.2 1030.65h0M765.2 1013.05h0M765.2 1018.95h0M765.2 1024.8h0M759.4 1030.65h0M765.2 1030.65h0M647.4 1047.05h0M653.2 1047.05h0M647.4 1052.95h0M653.2 1052.95h0M653.2 1058.8h0M779.2 1047.05h0M773.4 1058.8h0M773.4 1064.65h0M807.2 1081.05h0M807.2 1086.95h0M801.4 1092.8h0M801.4 1098.65h0M521.4 1115.05h0M521.4 1120.95h0M527.2 1120.95h0M521.4 1126.8h0M521.4 1132.65h0M801.4 1115.05h0M801.4 1120.95h0M801.4 1126.8h0M807.2 1126.8h0M807.2 1132.65h0M493.4 1183.05h0M499.2 1200.65h0M479.4 1217.05h0M485.2 1228.8h0M479.4 1234.65h0" stroke="#ff77ff" stroke-width="4.1" stroke-linecap="round" fill="none"/>
<path d="M647.4 163.05h0M653.2 163.05h0M1095.4 163.05h0M1101.2 163.05h0" stroke="#ffffff" stroke-width="4.1" stroke-linecap="round" fill="none"/>
<rect x="451" y="125" width="1" height="22" fill="#1a4680"/><rect x="452" y="125" width="2" height="22" fill="#d2d6d6"/><rect x="454" y="125" width="1" height="22" fill="#aa8050"/>
<rect x="1305" y="125" width="1" height="22" fill="#1a4680"/><rect x="1306" y="125" width="2" height="22" fill="#d2d6d6"/><rect x="1308" y="125" width="1" height="22" fill="#aa8050"/>
<rect x="451" y="159" width="1" height="22" fill="#1a4680"/><rect x="452" y="159" width="2" height="22" fill="#d2d6d6"/><rect x="454" y="159" width="1" height="22" fill="#aa8050"/>
<rect x="1305" y="159" width="1" height="22" fill="#1a4680"/><rect x="1306" y="159" width="2" height="22" fill="#d2d6d6"/><rect x="1308" y="159" width="1" height="22" fill="#aa8050"/>
<rect x="451" y="193" width="1" height="22" fill="#1a4680"/><rect x="452" y="193" width="2" height="22" fill="#d2d6d6"/><rect x="454" y="193" width="1" height="22" fill="#aa8050"/>
<rect x="1305" y="193" width="1" height="22" fill="#1a4680"/><rect x="1306" y="193" width="2" height="22" fill="#d2d6d6"/><rect x="1308" y="193" width="1" height="22" fill="#aa8050"/>
<rect x="451" y="227" width="1" height="22" fill="#1a4680"/><rect x="452" y="227" width="2" height="22" fill="#d2d6d6"/><rect x="454" y="227" width="1" height="22" fill="#aa8050"/>
<rect x="1305" y="227" width="1" height="22" fill="#1a4680"/><rect x="1306" y="227" width="2" height="22" fill="#d2d6d6"/><rect x="1308" y="227" width="1" height="22" fill="#aa8050"/>
<rect x="451" y="261" width="1" height="22" fill="#1a4680"/><rect x="452" y="261" width="2" height="22" fill="#d2d6d6"/><rect x="454" y="261" width="1" height="22" fill="#aa8050"/>
<rect x="1305" y="261" width="1" height="22" fill="#1a4680"/><rect x="1306" y="261" width="2" height="22" fill="#d2d6d6"/><rect x="1308" y="261" width="1" height="22" fill="#aa8050"/>
<rect x="451" y="295" width="1" height="22" fill="#1a4680"/><rect x="452" y="295" width="2" height="22" fill="#d2d6d6"/><rect x="454" y="295" width="1" height="22" fill="#aa8050"/>
<rect x="1305" y="295" width="1" height="22" fill="#1a4680"/><rect x="1306" y="295" width="2" height="22" fill="#d2d6d6"/><rect x="1308" y="295" width="1" height="22" fill="#aa8050"/>
<rect x="451" y="329" width="1" height="22" fill="#1a4680"/><rect x="452" y="329" width="2" height="22" fill="#d2d6d6"/><rect x="454" y="329" width="1" height="22" fill="#aa8050"/>
<rect x="1305" y="329" width="1" height="22" fill="#1a4680"/><rect x="1306" y="329" width="2" height="22" fill="#d2d6d6"/><rect x="1308" y="329" width="1" height="22" fill="#aa8050"/>
<rect x="451" y="363" width="1" height="22" fill="#1a4680"/><rect x="452" y="363" width="2" height="22" fill="#d2d6d6"/><rect x="454" y="363" width="1" height="22" fill="#aa8050"/>
<rect x="1305" y="363" width="1" height="22" fill="#1a4680"/><rect x="1306" y="363" width="2" height="22" fill="#d2d6d6"/><rect x="1308" y="363" width="1" height="22" fill="#aa8050"/>
<rect x="451" y="397" width="1" height="22" fill="#1a4680"/><rect x="452" y="397" width="2" height="22" fill="#d2d6d6"/><rect x="454" y="397" width="1" height="22" fill="#aa8050"/>
<rect x="1305" y="397" width="1" height="22" fill="#1a4680"/><rect x="1306" y="397" width="2" height="22" fill="#d2d6d6"/><rect x="1308" y="397" width="1" height="22" fill="#aa8050"/>
<rect x="451" y="431" width="1" height="22" fill="#1a4680"/><rect x="452" y="431" width="2" height="22" fill="#d2d6d6"/><rect x="454" y="431" width="1" height="22" fill="#aa8050"/>
<rect x="1305" y="431" width="1" height="22" fill="#1a4680"/><rect x="1306" y="431" width="2" height="22" fill="#d2d6d6"/><rect x="1308" y="431" width="1" height="22" fill="#aa8050"/>
<rect x="451" y="465" width="1" height="12" fill="#1a4680"/><rect x="452" y="465" width="2" height="12" fill="#d2d6d6"/><rect x="454" y="465" width="1" height="12" fill="#aa8050"/>
<rect x="1305" y="465" width="1" height="12" fill="#1a4680"/><rect x="1306" y="465" width="2" height="12" fill="#d2d6d6"/><rect x="1308" y="465" width="1" height="12" fill="#aa8050"/>
<rect x="452" y="474" width="856" height="3" fill="#cfcfcf"/>
<rect x="466" y="542" width="856" height="3" fill="#cfcfcf"/>
<rect x="465" y="542" width="1" height="13" fill="#1a4680"/><rect x="466" y="542" width="2" height="13" fill="#d2d6d6"/><rect x="468" y="542" width="1" height="13" fill="#aa8050"/>
<rect x="1319" y="542" width="1" height="13" fill="#1a4680"/><rect x="1320" y="542" width="2" height="13" fill="#d2d6d6"/><rect x="1322" y="542" width="1" height="13" fill="#aa8050"/>
<rect x="465" y="567" width="1" height="22" fill="#1a4680"/><rect x="466" y="567" width="2" height="22" fill="#d2d6d6"/><rect x="468" y="567" width="1" height="22" fill="#aa8050"/>
<rect x="1319" y="567" width="1" height="22" fill="#1a4680"/><rect x="1320" y="567" width="2" height="22" fill="#d2d6d6"/><rect x="1322" y="567" width="1" height="22" fill="#aa8050"/>
<rect x="465" y="601" width="1" height="22" fill="#1a4680"/><rect x="466" y="601" width="2" height="22" fill="#d2d6d6"/><rect x="468" y="601" width="1" height="22" fill="#aa8050"/>
<rect x="1319" y="601" width="1" height="22" fill="#1a4680"/><rect x="1320" y="601" width="2" height="22" fill="#d2d6d6"/><rect x="1322" y="601" width="1" height="22" fill="#aa8050"/>
<rect x="465" y="635" width="1" height="22" fill="#1a4680"/><rect x="466" y="635" width="2" height="22" fill="#d2d6d6"/><rect x="468" y="635" width="1" height="22" fill="#aa8050"/>
<rect x="1319" y="635" width="1" height="22" fill="#1a4680"/><rect x="1320" y="635" width="2" height="22" fill="#d2d6d6"/><rect x="1322" y="635" width="1" height="22" fill="#aa8050"/>
<rect x="465" y="669" width="1" height="22" fill="#1a4680"/><rect x="466" y="669" width="2" height="22" fill="#d2d6d6"/><rect x="468" y="669" width="1" height="22" fill="#aa8050"/>
<rect x="1319" y="669" width="1" height="22" fill="#1a4680"/><rect x="1320" y="669" width="2" height="22" fill="#d2d6d6"/><rect x="1322" y="669" width="1" height="22" fill="#aa8050"/>
<rect x="465" y="703" width="1" height="22" fill="#1a4680"/><rect x="466" y="703" width="2" height="22" fill="#d2d6d6"/><rect x="468" y="703" width="1" height="22" fill="#aa8050"/>
<rect x="1319" y="703" width="1" height="22" fill="#1a4680"/><rect x="1320" y="703" width="2" height="22" fill="#d2d6d6"/><rect x="1322" y="703" width="1" height="22" fill="#aa8050"/>
<rect x="465" y="737" width="1" height="22" fill="#1a4680"/><rect x="466" y="737" width="2" height="22" fill="#d2d6d6"/><rect x="468" y="737" width="1" height="22" fill="#aa8050"/>
<rect x="1319" y="737" width="1" height="22" fill="#1a4680"/><rect x="1320" y="737" width="2" height="22" fill="#d2d6d6"/><rect x="1322" y="737" width="1" height="22" fill="#aa8050"/>
<rect x="465" y="771" width="1" height="22" fill="#1a4680"/><rect x="466" y="771" width="2" height="22" fill="#d2d6d6"/><rect x="468" y="771" width="1" height="22" fill="#aa8050"/>
<rect x="1319" y="771" width="1" height="22" fill="#1a4680"/><rect x="1320" y="771" width="2" height="22" fill="#d2d6d6"/><rect x="1322" y="771" width="1" height="22" fill="#aa8050"/>
<rect x="465" y="805" width="1" height="22" fill="#1a4680"/><rect x="466" y="805" width="2" height="22" fill="#d2d6d6"/><rect x="468" y="805" width="1" height="22" fill="#aa8050"/>
<rect x="1319" y="805" width="1" height="22" fill="#1a4680"/><rect x="1320" y="805" width="2" height="22" fill="#d2d6d6"/><rect x="1322" y="805" width="1" height="22" fill="#aa8050"/>
<rect x="465" y="839" width="1" height="22" fill="#1a4680"/><rect x="466" y="839" width="2" height="22" fill="#d2d6d6"/><rect x="468" y="839" width="1" height="22" fill="#aa8050"/>
<rect x="1319" y="839" width="1" height="22" fill="#1a4680"/><rect x="1320" y="839" width="2" height="22" fill="#d2d6d6"/><rect x="1322" y="839" width="1" height="22" fill="#aa8050"/>
<rect x="465" y="873" width="1" height="22" fill="#1a4680"/><rect x="466" y="873" width="2" height="22" fill="#d2d6d6"/><rect x="468" y="873" width="1" height="22" fill="#aa8050"/>
<rect x="1319" y="873" width="1" height="22" fill="#1a4680"/><rect x="1320" y="873" width="2" height="22" fill="#d2d6d6"/><rect x="1322" y="873" width="1" height="22" fill="#aa8050"/>
<rect x="465" y="907" width="1" height="22" fill="#1a4680"/><rect x="466" y="907" width="2" height="22" fill="#d2d6d6"/><rect x="468" y="907" width="1" height="22" fill="#aa8050"/>
<rect x="1319" y="907" width="1" height="22" fill="#1a4680"/><rect x="1320" y="907" width="2" height="22" fill="#d2d6d6"/><rect x="1322" y="907" width="1" height="22" fill="#aa8050"/>
<rect x="465" y="941" width="1" height="22" fill="#1a4680"/><rect x="466" y="941" width="2" height="22" fill="#d2d6d6"/><rect x="468" y="941" width="1" height="22" fill="#aa8050"/>
<rect x="1319" y="941" width="1" height="22" fill="#1a4680"/><rect x="1320" y="941" width="2" height="22" fill="#d2d6d6"/><rect x="1322" y="941" width="1" height="22" fill="#aa8050"/>
<rect x="465" y="975" width="1" height="22" fill="#1a4680"/><rect x="466" y="975" width="2" height="22" fill="#d2d6d6"/><rect x="468" y="975" width="1" height="22" fill="#aa8050"/>
<rect x="1319" y="975" width="1" height="22" fill="#1a4680"/><rect x="1320" y="975" width="2" height="22" fill="#d2d6d6"/><rect x="1322" y="975" width="1" height="22" fill="#aa8050"/>
<rect x="465" y="1009" width="1" height="22" fill="#1a4680"/><rect x="466" y="1009" width="2" height="22" fill="#d2d6d6"/><rect x="468" y="1009" width="1" height="22" fill="#aa8050"/>
<rect x="1319" y="1009" width="1" height="22" fill="#1a4680"/><rect x="1320" y="1009" width="2" height="22" fill="#d2d6d6"/><rect x="1322" y="1009" width="1" height="22" fill="#aa8050"/>
<rect x="465" y="1043" width="1" height="22" fill="#1a4680"/><rect x="466" y="1043" width="2" height="22" fill="#d2d6d6"/><rect x="468" y="1043" width="1" height="22" fill="#aa8050"/>
<rect x="1319" y="1043" width="1" height="22" fill="#1a4680"/><rect x="1320" y="1043" width="2" height="22" fill="#d2d6d6"/><rect x="1322" y="1043" width="1" height="22" fill="#aa8050"/>
<rect x="465" y="1077" width="1" height="22" fill="#1a4680"/><rect x="466" y="1077" width="2" height="22" fill="#d2d6d6"/><rect x="468" y="1077" width="1" height="22" fill="#aa8050"/>
<rect x="1319" y="1077" width="1" height="22" fill="#1a4680"/><rect x="1320" y="1077" width="2" height="22" fill="#d2d6d6"/><rect x="1322" y="1077" width="1" height="22" fill="#aa8050"/>
<rect x="465" y="1111" width="1" height="22" fill="#1a4680"/><rect x="466" y="1111" width="2" height="22" fill="#d2d6d6"/><rect x="468" y="1111" width="1" height="22" fill="#aa8050"/>
<rect x="1319" y="1111" width="1" height="22" fill="#1a4680"/><rect x="1320" y="1111" width="2" height="22" fill="#d2d6d6"/><rect x="1322" y="1111" width="1" height="22" fill="#aa8050"/>
<rect x="465" y="1145" width="1" height="22" fill="#1a4680"/><rect x="466" y="1145" width="2" height="22" fill="#d2d6d6"/><rect x="468" y="1145" width="1" height="22" fill="#aa8050"/>
<rect x="1319" y="1145" width="1" height="22" fill="#1a4680"/><rect x="1320" y="1145" width="2" height="22" fill="#d2d6d6"/><rect x="1322" y="1145" width="1" height="22" fill="#aa8050"/>
<rect x="465" y="1179" width="1" height="22" fill="#1a4680"/><rect x="466" y="1179" width="2" height="22" fill="#d2d6d6"/><rect x="468" y="1179" width="1" height="22" fill="#aa8050"/>
<rect x="1319" y="1179" width="1" height="22" fill="#1a4680"/><rect x="1320" y="1179" width="2" height="22" fill="#d2d6d6"/><rect x="1322" y="1179" width="1" height="22" fill="#aa8050"/>
<rect x="465" y="1213" width="1" height="22" fill="#1a4680"/><rect x="466" y="1213" width="2" height="22" fill="#d2d6d6"/><rect x="468" y="1213" width="1" height="22" fill="#aa8050"/>
<rect x="1319" y="1213" width="1" height="22" fill="#1a4680"/><rect x="1320" y="1213" width="2" height="22" fill="#d2d6d6"/><rect x="1322" y="1213" width="1" height="22" fill="#aa8050"/>
<rect x="465" y="1247" width="1" height="12" fill="#1a4680"/><rect x="466" y="1247" width="2" height="12" fill="#d2d6d6"/><rect x="468" y="1247" width="1" height="12" fill="#aa8050"/>
<rect x="1319" y="1247" width="1" height="12" fill="#1a4680"/><rect x="1320" y="1247" width="2" height="12" fill="#d2d6d6"/><rect x="1322" y="1247" width="1" height="12" fill="#aa8050"/>
<rect x="466" y="1256" width="856" height="3" fill="#cfcfcf"/>
<rect x="124" y="1308" width="14" height="34" fill="#ffffff"/>
</svg>
<div class="t" style="left:166px;top:424px;color:#ffffff"><span class="c">-</span><span class="c">2</span><span class="c">2</span><span class="c">5</span><span class="c">.</span><span class="c">1</span><span class="c z">0</span><span class="c">9</span><span class="c">8</span><span class="c">3</span><span class="c">1</span><span class="c">4</span><span class="c">2</span><span class="c">3</span><span class="c">9</span><span class="c z">0</span><span class="c">7</span><span class="c">7</span><span class="c">4</span></div>
<div class="t" style="left:446px;top:492px;color:#ffffff"><span class="c">1</span></div>
<div class="t" style="left:1272px;top:492px;color:#ffffff"><span class="c">1</span><span class="c z">0</span><span class="c z">0</span></div>
<div class="t" style="left:194px;top:560px;color:#ffffff"><span class="c z">0</span><span class="c">.</span><span class="c">9</span><span class="c">6</span><span class="c">6</span><span class="c">6</span><span class="c">5</span><span class="c">4</span><span class="c">4</span><span class="c">5</span><span class="c">9</span><span class="c">7</span><span class="c">1</span><span class="c">7</span><span class="c">6</span><span class="c">5</span><span class="c">8</span><span class="c">5</span></div>
<div class="t" style="left:1342px;top:560px;color:#6871ff"><span class="c">y</span><span class="c">_</span><span class="c">1</span></div>
<div class="t" style="left:1342px;top:594px;color:#ff6e66"><span class="c">y</span><span class="c">_</span><span class="c">2</span></div>
<div class="t" style="left:166px;top:1206px;color:#ffffff"><span class="c z">0</span><span class="c">.</span><span class="c z">0</span><span class="c z">0</span><span class="c">4</span><span class="c">9</span><span class="c">5</span><span class="c">5</span><span class="c">2</span><span class="c">2</span><span class="c">9</span><span class="c">6</span><span class="c">8</span><span class="c">6</span><span class="c">5</span><span class="c">3</span><span class="c">9</span><span class="c">1</span><span class="c">6</span><span class="c">4</span></div>
<div class="t" style="left:460px;top:1274px;color:#ffffff"><span class="c">1</span></div>
<div class="t" style="left:1300px;top:1274px;color:#ffffff"><span class="c">2</span><span class="c z">0</span></div>
</body></html>
